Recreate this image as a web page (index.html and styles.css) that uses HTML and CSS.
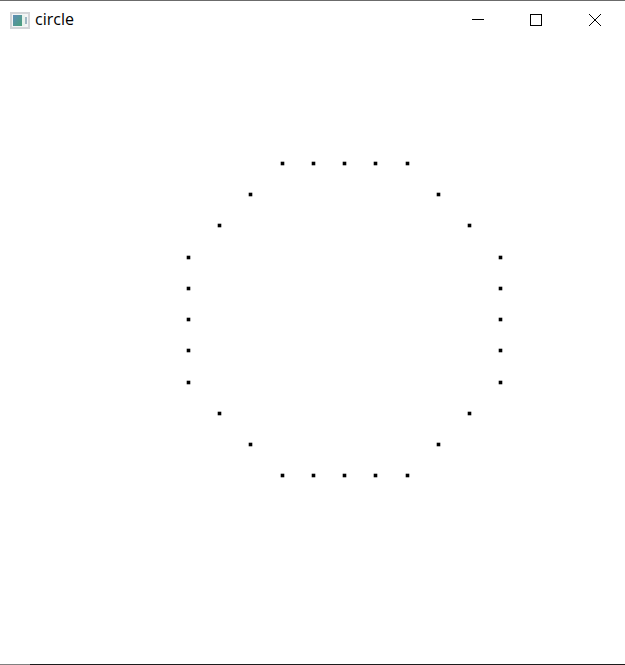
FILE: index.html
```html
<!DOCTYPE html>
<html lang="en">
<head>
    <meta charset="UTF-8">
    <title>circle</title>
    <link rel="stylesheet" href="styles.css">
</head>
<body>
    <div class="window">
        <div class="titlebar">
            <svg class="app-icon" width="20" height="17" viewBox="0 0 20 17">
                <defs>
                    <linearGradient id="pane" x1="0" y1="0" x2="1" y2="1">
                        <stop offset="0" stop-color="#5f8db8"/>
                        <stop offset="1" stop-color="#4aa07a"/>
                    </linearGradient>
                </defs>
                <rect x="0" y="0" width="20" height="17" fill="#d3d5d8"/>
                <rect x="2" y="2" width="16" height="13" fill="#f4f5f6"/>
                <rect x="3" y="3" width="9" height="11" fill="url(#pane)"/>
                <rect x="12" y="3" width="3" height="11" fill="#e8f2ec"/>
                <rect x="15" y="5" width="2" height="7" fill="#9fb8c4"/>
            </svg>
            <span class="title">circle</span>
            <div class="controls">
                <div class="control">
                    <svg width="12" height="12" viewBox="0 0 12 12"><path d="M0 5.5H12" stroke="#000" fill="none"/></svg>
                </div>
                <div class="control">
                    <svg width="12" height="12" viewBox="0 0 12 12"><rect x="0.5" y="0.5" width="11" height="11" stroke="#000" fill="none"/></svg>
                </div>
                <div class="control control-close">
                    <svg width="12" height="12" viewBox="0 0 12 12"><path d="M0 0L12 12M12 0L0 12" stroke="#000" stroke-width="1" fill="none"/></svg>
                </div>
            </div>
        </div>
        <div class="client">
            <svg class="circle" width="625" height="625" viewBox="0 0 625 625">
                <g id="dots" fill="#000"></g>
            </svg>
        </div>
        <div class="bottom-edge"><div class="bottom-edge-left"></div></div>
    </div>
    <script src="dots.js"></script>
</body>
</html>
```

FILE: styles.css
```css
html, body {
    margin: 0;
    padding: 0;
    background-color: #ffffff;
}
.window {
    display: flex;
    flex-direction: column;
    width: 625px;
    height: 665px;
    overflow: hidden;
    box-sizing: border-box;
    border-top: 1px solid #6b6b6b;
    font-family: "Open Sans", "Liberation Sans", sans-serif;
}
.titlebar {
    display: flex;
    align-items: center;
    flex: none;
    height: 38px;
    padding-left: 10px;
    padding-right: 1px;
}
.app-icon {
    flex: none;
    margin-right: 5px;
}
.title {
    font-size: 16px;
    line-height: 20px;
    margin-bottom: 2px;
    color: #000000;
}
.controls {
    display: flex;
    margin-left: auto;
}
.control {
    display: flex;
    align-items: center;
    justify-content: center;
    width: 58px;
    height: 38px;
}
.control-close {
    margin-left: 1px;
}
.client {
    flex: 1;
    min-height: 0;
}
.circle {
    display: block;
    margin-top: -1px;
}
.bottom-edge {
    flex: none;
    height: 1px;
    background-color: #1c1c1c;
}
.bottom-edge-left {
    width: 30px;
    height: 1px;
    background-color: #808080;
}
```

FILE: dots.js
```js
// 11 x 11 grid, pitch 31.25px; the svg starts 38px below the top of the page
const pitch = 31.25;
const originX = 187.75;
const originY = 162.75 - 38;
const blur = 0.3; // part of a pixel past each edge, gives the soft grey rim
const spans = [[3, 7], [2, 8], [1, 9], [0, 10], [0, 10], [0, 10], [0, 10], [0, 10], [1, 9], [2, 8], [3, 7]];
const group = document.getElementById('dots');

function addDot(col, row) {
    const dot = document.createElementNS('http://www.w3.org/2000/svg', 'rect');
    dot.setAttribute('x', Math.round(originX + col * pitch) - 1 - blur);
    dot.setAttribute('y', Math.round(originY + row * pitch) - 1 - blur);
    dot.setAttribute('width', 3 + blur * 2);
    dot.setAttribute('height', 3 + blur * 2);
    group.appendChild(dot);
}

spans.forEach(function(span, row) {
    if (row === 0 || row === 10) {
        for (let col = span[0]; col <= span[1]; col++) addDot(col, row);
    } else {
        addDot(span[0], row);
        addDot(span[1], row);
    }
});
```
